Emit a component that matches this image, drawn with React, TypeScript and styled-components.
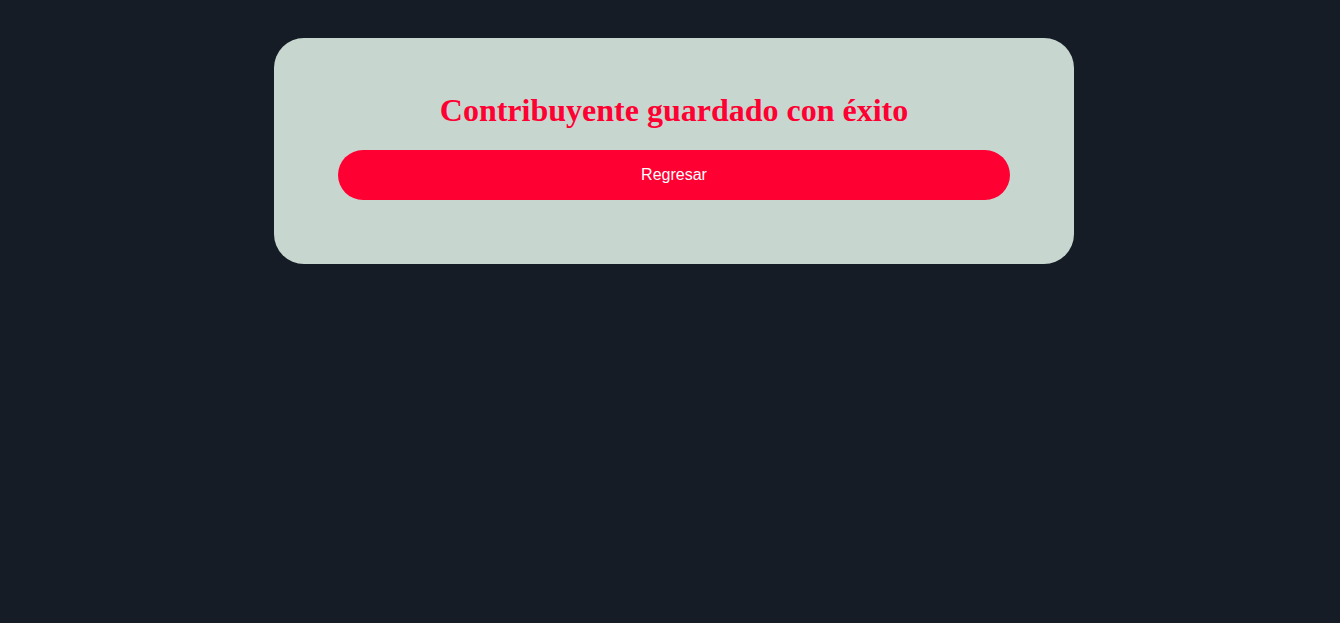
import styled, { createGlobalStyle } from "styled-components";

const GlobalStyle = createGlobalStyle`
  html, body {
    margin: 0;
    padding: 0;
    background: #151c26;
    min-height: 100%;
  }
  body {
    font-family: "Liberation Serif", "Times New Roman", serif;
  }
`;

const Page = styled.div`
  display: flex;
  justify-content: center;
  align-items: flex-start;
  padding: 38px 0 0 8px;
  min-height: 100vh;
  box-sizing: border-box;
`;

const Card = styled.div`
  width: 800px;
  box-sizing: border-box;
  padding: 32px 64px 64px;
  background: #c7d7cf;
  border-radius: 30px;
  display: flex;
  flex-direction: column;
  align-items: stretch;
`;

const Title = styled.h1`
  margin: 22px 0 21px;
  font-family: "Liberation Serif", "Times New Roman", serif;
  font-size: 32px;
  font-weight: bold;
  line-height: normal;
  color: #ff0033;
  text-align: center;
`;

const Button = styled.button`
  height: 50px;
  border: none;
  border-radius: 25px;
  background: #ff0033;
  color: #ffffff;
  font-family: "Liberation Sans", Arial, sans-serif;
  font-size: 16px;
  cursor: pointer;
`;

const App = () => {
  return (
    <>
      <GlobalStyle />
      <Page>
        <Card>
          <Title>Contribuyente guardado con éxito</Title>
          <Button type="button">Regresar</Button>
        </Card>
      </Page>
    </>
  );
};

export default App;
